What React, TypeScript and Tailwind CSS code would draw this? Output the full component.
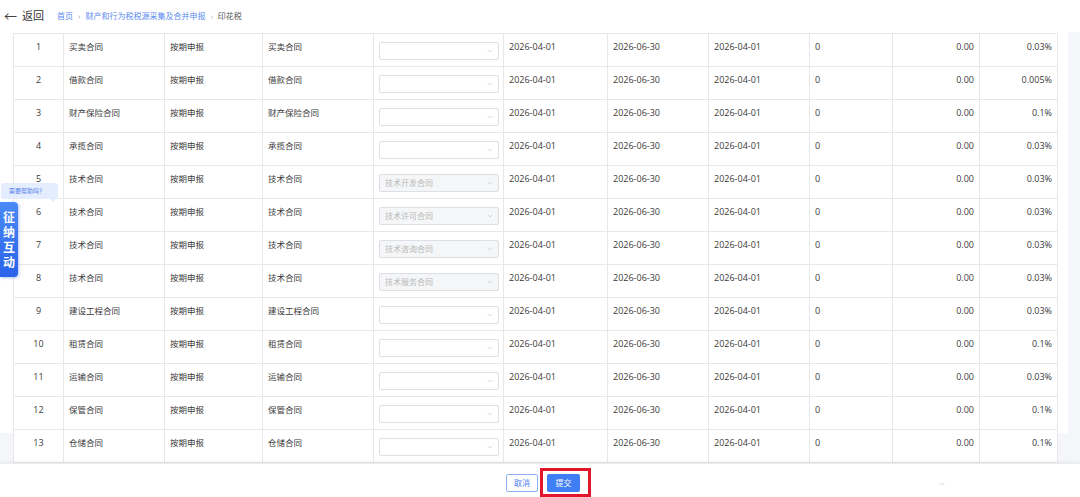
import { ChevronDown } from "lucide-react";

type Row = {
  name: string;
  sub: string;
  pick: string;
  rate: string;
};

const rows: Row[] = [
  { name: "买卖合同", sub: "买卖合同", pick: "", rate: "0.03%" },
  { name: "借款合同", sub: "借款合同", pick: "", rate: "0.005%" },
  { name: "财产保险合同", sub: "财产保险合同", pick: "", rate: "0.1%" },
  { name: "承揽合同", sub: "承揽合同", pick: "", rate: "0.03%" },
  { name: "技术合同", sub: "技术合同", pick: "技术开发合同", rate: "0.03%" },
  { name: "技术合同", sub: "技术合同", pick: "技术许可合同", rate: "0.03%" },
  { name: "技术合同", sub: "技术合同", pick: "技术咨询合同", rate: "0.03%" },
  { name: "技术合同", sub: "技术合同", pick: "技术服务合同", rate: "0.03%" },
  { name: "建设工程合同", sub: "建设工程合同", pick: "", rate: "0.03%" },
  { name: "租赁合同", sub: "租赁合同", pick: "", rate: "0.1%" },
  { name: "运输合同", sub: "运输合同", pick: "", rate: "0.03%" },
  { name: "保管合同", sub: "保管合同", pick: "", rate: "0.1%" },
  { name: "仓储合同", sub: "仓储合同", pick: "", rate: "0.1%" },
];

const widths = [50, 101, 98, 111, 130, 104, 101, 101, 83, 87, 78];

const cell = "border border-[#e8e8e8] align-top pt-[7px] px-[5px] leading-[12px]";

const App = () => {
  return (
    <div
      className="w-[1080px] h-[497px] overflow-hidden bg-white text-[#3a3a3a] relative"
      style={{ fontFamily: '"Open Sans", "Noto Sans CJK SC", sans-serif' }}
    >
      {/* top bar */}
      <div className="h-[32px] flex items-center pl-[4px] bg-white">
        <span className="text-[13px] leading-none text-[#444] mr-[5px]">←</span>
        <span className="text-[11px] text-[#333]">返回</span>
        <div className="flex items-center ml-[13px] text-[8px] text-[#5b8bef] gap-[5px]">
          <span>首页</span>
          <span className="text-[#aaa]">›</span>
          <span>财产和行为税税源采集及合并申报</span>
          <span className="text-[#aaa]">›</span>
          <span className="text-[#555]">印花税</span>
        </div>
      </div>

      {/* content */}
      <div className="h-[431px] bg-[#f5f6f9] overflow-hidden">
        <div className="w-[1068px] h-[401px] bg-white pl-[13px] pr-[11px] pt-[1px]">
          <table className="table-fixed border-collapse w-[1044px] text-[8.5px] bg-white">
            <colgroup>
              {widths.map((w, i) => (
                <col key={i} style={{ width: w }} />
              ))}
            </colgroup>
            <tbody>
              {rows.map((r, idx) => (
                <tr key={idx} className="h-[33px]">
                  <td className={`${cell} text-center text-[9px]`}>{idx + 1}</td>
                  <td className={cell}>{r.name}</td>
                  <td className={cell}>按期申报</td>
                  <td className={cell}>{r.sub}</td>
                  <td className="border border-[#e8e8e8] align-top pt-[8px] px-[5px]">
                    <div
                      className={`h-[18px] w-[120px] rounded-[2px] border border-[#dcdfe6] flex items-center pl-[5px] pr-[4px] ${
                        r.pick ? "bg-[#f5f6f7] text-[#b8b8b8]" : "bg-white"
                      }`}
                    >
                      <span className="leading-none text-[8px]">{r.pick}</span>
                      <ChevronDown className="ml-auto w-[8px] h-[8px] text-[#b5b5b5]" strokeWidth={1.5} />
                    </div>
                  </td>
                  <td className={`${cell} text-[9px]`}>2026-04-01</td>
                  <td className={`${cell} text-[9px]`}>2026-06-30</td>
                  <td className={`${cell} text-[9px]`}>2026-04-01</td>
                  <td className={`${cell} text-[9px]`}>0</td>
                  <td className={`${cell} text-right text-[9px]`}>0.00</td>
                  <td className={`${cell} text-right text-[9px]`}>{r.rate}</td>
                </tr>
              ))}
            </tbody>
          </table>
        </div>
      </div>

      {/* footer */}
      <div className="h-[34px] bg-white flex items-start pl-[506px] pr-[134px] shadow-[0_-1px_3px_rgba(0,0,0,0.06)] border-t border-[#ececec] relative">
        <button className="mt-[10px] h-[18px] w-[32px] rounded-[2px] border border-[#8fb1f6] text-[#4d7cf5] text-[8px] leading-none bg-white">
          取消
        </button>
        <span className="ml-[2px] mt-[4px] border-[3px] border-[#e3162b] pl-[4px] pr-[8px] pt-[3px] pb-[2px] flex">
          <button className="h-[18px] w-[33px] rounded-[2px] bg-[#3f7ff3] text-white text-[8px] leading-none">
            提交
          </button>
        </span>
        <ChevronDown className="ml-auto mt-[16px] w-[8px] h-[8px] text-[#aaa]" strokeWidth={1.5} />
      </div>

      {/* help bubble */}
      <div className="absolute left-[1px] top-[183px] w-[57px] h-[16px] rounded-[3px] bg-[#e4edfd] text-[#5b86ee] text-[6px] flex items-center pl-[8px]">
        需要帮助吗？
        <span className="absolute left-[48px] top-[15px] w-0 h-0 border-l-[4px] border-r-[4px] border-t-[4px] border-l-transparent border-r-transparent border-t-[#e4edfd]" />
      </div>

      {/* side tab */}
      <div className="absolute left-0 top-[202px] w-[18px] h-[75px] rounded-r-[4px] bg-gradient-to-b from-[#4b8af7] to-[#2a62e9] text-white text-[12px] font-bold leading-[15px] flex flex-col items-center justify-center shadow-[1px_1px_3px_rgba(40,90,220,0.35)]">
        <span>征</span>
        <span>纳</span>
        <span>互</span>
        <span>动</span>
      </div>
    </div>
  );
};

export default App;
